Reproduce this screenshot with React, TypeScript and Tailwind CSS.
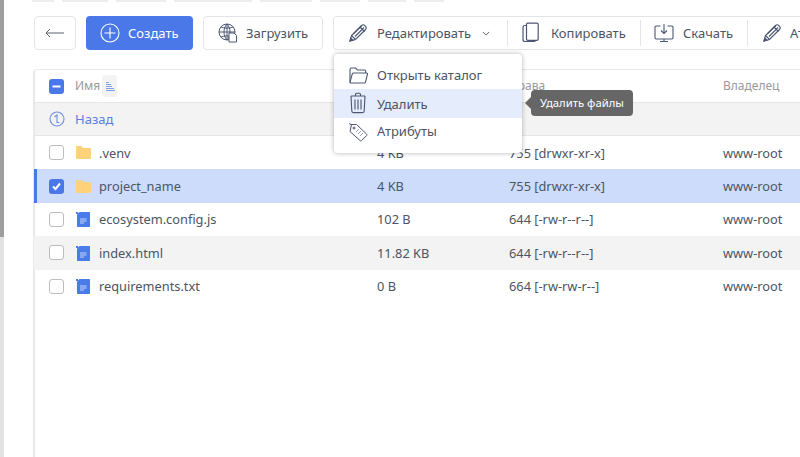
import React from "react";

const stroke = "#4a5672";

function Folder() {
  return (
    <svg width="15" height="13" viewBox="0 0 15 13" className="shrink-0">
      <path d="M0 1.500C0 .5.600 0 1.500 0h3.200c.6 0 .9.200 1.200.6L7 2h6.500C14.500 2 15 2.600 15 3.500V11.500c0 .9-.6 1.500-1.500 1.500h-12C.6 13 0 12.400 0 11.500z" fill="#fdd27a" />
    </svg>
  );
}

function FileIcon() {
  return (
    <svg width="14" height="16" viewBox="0 0 14 16" className="shrink-0">
      <path d="M3.500 1H13c.6 0 1 .4 1 1v13c0 .6-.4 1-1 1H2c-.6 0-1-.4-1-1V3.500z" fill="#4a7bea" />
      <path d="M0 1h2v2H0z" fill="#4a7bea" />
      <path d="M4 8h6.500M4 10h6.500M4 12h4" stroke="#c5d5fa" strokeWidth="1" />
    </svg>
  );
}

function Pencil() {
  return (
    <svg width="20" height="20" viewBox="0 0 20 20" fill="none" stroke={stroke} strokeWidth="1.100" className="shrink-0">
      <path d="M2 18l1.500-5.500L13.500 2.500c1-.9 2.300-.9 3.200 0l.8.800c.9.900.9 2.200 0 3.200L7.500 16.500z" />
      <path d="M3.500 12.500l4 4M12 4l4.500 4.500M5.200 11L14 2.500M7 13.500l9-9" />
      <path d="M2 18l.8-3 2.200 2.200z" fill={stroke} />
    </svg>
  );
}

function Chk({ state }: { state?: "on" | "minus" }) {
  if (state) {
    return (
      <span className="w-[15px] h-[15px] rounded-[3px] bg-[#4a78e8] flex items-center justify-center shrink-0">
        <svg width="11" height="11" viewBox="0 0 11 11" fill="none" stroke="#fff" strokeWidth="2">
          {state === "on" ? <path d="M2 5.500l2.500 2.500L9 2.500" /> : <path d="M1.500 5.500h8" />}
        </svg>
      </span>
    );
  }
  return <span className="w-[15px] h-[15px] rounded-[3px] border-[1.500px] border-[#bdbdbd] bg-white shrink-0" />;
}

function Divider() {
  return <span className="w-px h-[26px] bg-[#e3e5e8] shrink-0" />;
}

function Row({
  name,
  size,
  perm,
  kind,
  selected,
  shaded,
}: {
  name: string;
  size: string;
  perm: string;
  kind: "folder" | "file";
  selected?: boolean;
  shaded?: boolean;
}) {
  return (
    <div
      className={`-ml-px h-[33.400px] flex items-center text-[12.800px] text-[#4b5563] border-l-[3px] ${
        selected ? "bg-[#cddcfb] border-[#4a78e8]" : shaded ? "bg-[#f3f3f3] border-transparent" : "border-transparent"
      }`}
    >
      <span className="w-[12px] shrink-0" />
      <Chk state={selected ? "on" : undefined} />
      <span className="w-[11px] shrink-0" />
      <span className="w-[16px] flex justify-center shrink-0">{kind === "folder" ? <Folder /> : <FileIcon />}</span>
      <span className="ml-[8px] w-[278px] shrink-0 pt-px">{name}</span>
      <span className="w-[132px] shrink-0 pt-px">{size}</span>
      <span className="w-[214px] shrink-0 pt-px">{perm}</span>
      <span className="shrink-0 pt-px">www-root</span>
    </div>
  );
}

export default function App() {
  return (
    <div className="relative w-[800px] h-[457px] overflow-hidden bg-white flex font-['Noto_Sans','Open_Sans',sans-serif]">
      <div className="w-[4px] h-full bg-[#e2e2e2] shrink-0 flex flex-col">
        <div className="h-[237px] bg-[#9e9e9e]" />
      </div>
      <div className="flex-1 min-w-0 flex flex-col pl-[30px]">
        <div className="h-[16px] flex items-start gap-[8px] -ml-[2px]">
          {[22, 46, 50, 78, 52, 40, 38, 30].map((w, i) => (
            <span key={i} style={{ width: w }} className="h-[1.500px] bg-[#eeeeee]" />
          ))}
        </div>

        <div className="h-[34px] flex gap-[10px] text-[13px] text-[#4b5563] shrink-0">
          <button className="w-[42px] h-full rounded-[4px] border border-[#e3e5e8] flex items-center justify-center shrink-0">
            <svg width="20" height="10" viewBox="0 0 20 10" fill="none" stroke="#5b6270" strokeWidth="1">
              <path d="M19 5H1M5 1L1 5l4 4" />
            </svg>
          </button>
          <button className="w-[107px] h-full rounded-[4px] bg-[#4a78e8] text-white flex items-center pl-[14px] gap-[8px] shrink-0">
            <svg width="20" height="20" viewBox="0 0 20 20" fill="none" stroke="#fff" strokeWidth="1.100">
              <circle cx="10" cy="10" r="9" />
              <path d="M10 4.500v11M4.500 10h11" />
            </svg>
            <span className="pt-px">Создать</span>
          </button>
          <button className="w-[120px] h-full rounded-[4px] border border-[#e3e5e8] flex items-center pl-[14px] gap-[8px] shrink-0">
            <svg width="20" height="20" viewBox="0 0 20 20" fill="none" stroke={stroke} strokeWidth="1">
              <circle cx="9" cy="9" r="8" />
              <path d="M1 9h16M9 1v16M3 4c3 1.500 9 1.500 12 0M3 14c3-1.500 9-1.500 12 0M9 1c-4 4-4 12 0 16M9 1c4 4 4 12 0 16" />
              <path d="M11 10h5l2.500 2.500V19H11z" fill="#fff" />
            </svg>
            <span className="pt-px">Загрузить</span>
          </button>
          <div className="flex-1 min-w-0 h-full rounded-l-[4px] border border-r-0 border-[#e3e5e8] flex items-center overflow-hidden">
            <div className="w-[173px] flex items-center pl-[14px] shrink-0">
              <Pencil />
              <span className="ml-[9px] pt-px">Редактировать</span>
              <svg width="8" height="5" viewBox="0 0 10 6" fill="none" stroke="#5b6270" strokeWidth="1.200" className="ml-[11px]">
                <path d="M1 1l4 4 4-4" />
              </svg>
            </div>
            <Divider />
            <div className="w-[132px] flex items-center pl-[13px] shrink-0">
              <svg width="20" height="22" viewBox="0 0 20 22" fill="none" stroke={stroke} strokeWidth="1.200">
                <path d="M6 3.500h-2c-1 0-2 .6-2 2v12c0 1.500 1 2 2 2h9c1.200 0 1.800-.6 1.800-1.500" />
                <path d="M5.500 2.500c0-.8.500-1.300 1.300-1.300h9c.9 0 1.400.5 1.400 1.300V17c0 .8-.5 1.300-1.400 1.300h-9c-.8 0-1.300-.5-1.300-1.300z" fill="#fff" />
              </svg>
              <span className="ml-[10px] pt-px">Копировать</span>
            </div>
            <Divider />
            <div className="w-[106px] flex items-center pl-[13px] shrink-0">
              <svg width="20" height="20" viewBox="0 0 20 20" fill="none" stroke={stroke} strokeWidth="1.100">
                <path d="M6.500 3H2.200C1.500 3 1 3.500 1 4.200v10.600c0 .7.500 1.200 1.200 1.200h15.600c.7 0 1.200-.5 1.200-1.200V4.200C19 3.500 18.500 3 17.800 3H13.500" />
                <path d="M10 1v9.500M7 7.500l3 3 3-3M6 18.500h8M10 16v2.500" />
              </svg>
              <span className="ml-[9px] pt-px">Скачать</span>
            </div>
            <Divider />
            <div className="flex items-center pl-[14px] shrink-0">
              <Pencil />
              <span className="ml-[8px] pt-px">Атрибуты</span>
            </div>
          </div>
        </div>

        <div className="mt-[19px] flex-1 -ml-px border-l-2 border-t border-[#e9e9e9] rounded-tl-[4px] -mr-[8px] text-[#9a9a9a]">
          <div className="h-[33px] flex items-center text-[12px] border-b border-[#e6e6e6] pl-[14px]">
            <Chk state="minus" />
            <div className="ml-[11px] w-[434px] shrink-0 flex items-center">
              <span>Имя</span>
              <span className="ml-[2px] w-[15px] h-[22px] rounded-[3px] bg-[#f3f3f3] flex items-center justify-center">
                <svg width="10" height="11" viewBox="0 0 10 11" fill="none" stroke="#7f9fe9" strokeWidth="1">
                  <path d="M1 1.500h3M1 3.500h5M1 5.500h6M1 7.500h8M1 9.500h9" />
                </svg>
              </span>
            </div>
            <span className="w-[214px] shrink-0">Права</span>
            <span className="shrink-0">Владелец</span>
          </div>
          <div className="h-[33px] flex items-center bg-[#f3f3f3] border-b border-[#e6e6e6] pl-[14px] text-[13px] text-[#5c7fe0]">
            <svg width="16" height="16" viewBox="0 0 16 16" fill="none" stroke="#6d8fe6" strokeWidth="1.100">
              <circle cx="8" cy="8" r="7" />
              <path d="M5.500 6L8 4v7.500h2.500" />
            </svg>
            <span className="ml-[10px] pt-[2px]">Назад</span>
          </div>
          <Row name=".venv" size="4 KB" perm="755 [drwxr-xr-x]" kind="folder" />
          <Row name="project_name" size="4 KB" perm="755 [drwxr-xr-x]" kind="folder" selected />
          <Row name="ecosystem.config.js" size="102 B" perm="644 [-rw-r--r--]" kind="file" />
          <Row name="index.html" size="11.82 KB" perm="644 [-rw-r--r--]" kind="file" shaded />
          <Row name="requirements.txt" size="0 B" perm="664 [-rw-rw-r--]" kind="file" />
        </div>
      </div>

      <div className="absolute left-[334px] top-[54px] w-[188px] h-[99px] bg-white rounded-[4px] shadow-[0_0_5px_rgba(0,0,0,0.3)] py-[7px] text-[13px] text-[#4b5563]">
        <div className="h-[28px] flex items-center pl-[14px]">
          <svg width="20" height="18" viewBox="0 0 20 18" fill="none" stroke={stroke} strokeWidth="1.100" className="shrink-0">
            <path d="M2 16V3.500C2 2.500 2.500 2 3.500 2h4l2 2h7c.8 0 1.200.5 1.200 1.300V7" />
            <path d="M2 16c-.3.500.2 1 .8 1h13.500c.6 0 1-.3 1.200-.9L19.500 8c.1-.6-.2-1-.8-1H5.500c-.6 0-1 .3-1.200.9z" />
          </svg>
          <span className="ml-[9px] whitespace-nowrap pt-[2px]">Открыть каталог</span>
        </div>
        <div className="h-[28.500px] flex items-center pl-[14px] bg-[#e5edfc]">
          <svg width="20" height="22" viewBox="0 0 20 22" fill="none" stroke={stroke} strokeWidth="1.100" className="shrink-0">
            <path d="M3 4h14M7.500 4V2.500c0-.8.400-1.200 1.200-1.200h2.600c.8 0 1.200.4 1.200 1.200V4" />
            <path d="M3 4l.8 15c0 1 .7 1.600 1.600 1.600h9.200c.9 0 1.600-.6 1.600-1.600L17 4" />
            <path d="M7 7.500v10M10 7.500v10M13 7.500v10" />
          </svg>
          <span className="ml-[9px] pt-[2px]">Удалить</span>
        </div>
        <div className="h-[28.500px] flex items-center pl-[14px]">
          <svg width="20" height="20" viewBox="0 0 20 20" fill="none" stroke={stroke} strokeWidth="1" className="shrink-0">
            <path d="M1 1.500l3 1.500M3.500 2.500h5l10 9.500c.5.500.5 1.200 0 1.700l-4.800 4.800c-.5.500-1.200.5-1.700 0L2 9.500z" />
            <circle cx="6" cy="6" r="1" />
            <path d="M8 10l3-3M10 12l3-3M12 14l3-3" stroke="#9aa2b5" />
          </svg>
          <span className="ml-[9px]">Атрибуты</span>
        </div>
      </div>

      <div className="absolute left-[531px] top-[90px] w-[102px] h-[26px] rounded-[4px] bg-[#666666] text-white text-[11.300px] flex items-center justify-center whitespace-nowrap">
        Удалить файлы
        <span className="absolute -left-[6px] top-[7px] w-0 h-0 border-y-[6px] border-y-transparent border-r-[6px] border-r-[#666666]" />
      </div>
    </div>
  );
}
